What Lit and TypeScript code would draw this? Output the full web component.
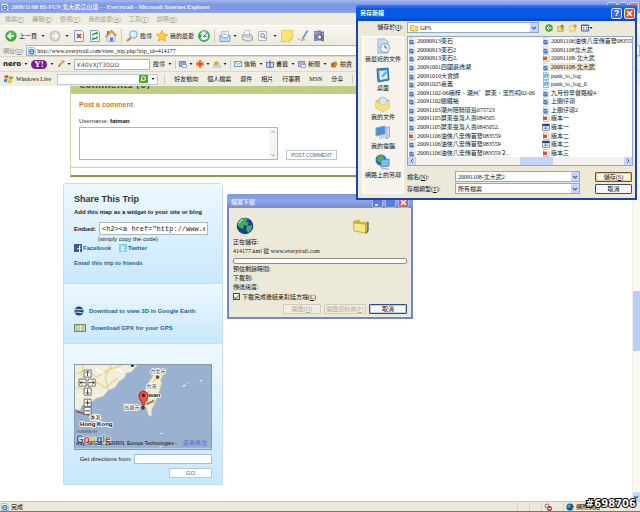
import { LitElement, html, css, svg } from "lit";
import { customElement } from "lit/decorators.js";

const base = css`
  * { box-sizing: border-box; }
  button, input, select, textarea {
    font: inherit; color: inherit; margin: 0; padding: 0; border: 0;
    background: none; border-radius: 0; min-width: 0; outline: none;
  }
  button { white-space: nowrap; }
  select { appearance: none; }
  svg { display: block; flex: none; }
  a { text-decoration: none; color: inherit; }
  u { text-decoration: underline; }
`;

const i = (size: number, body: unknown, h = size) =>
  html`<svg width=${size} height=${h} viewBox="0 0 ${size} ${h}" aria-hidden="true">${body}</svg>`;

const caret = i(4, svg`<path d="M0.5 1h3L2 3z" fill="#222"/>`);
const chevron = i(6, svg`<path d="M1 2l2 2 2-2" fill="none" stroke="#4d6185" stroke-width="1.2"/>`);
const cross = svg`<path d="M3 3l5 5M8 3l-5 5" stroke="#fff" stroke-width="1.4"/>`;

const back = i(12, svg`<circle cx="6" cy="6" r="5.6" fill="#3da537"/><circle cx="6" cy="4.5" r="4" fill="#6cc661" opacity=".6"/><path d="M6 3L3 6l3 3M3.3 6H9" fill="none" stroke="#fff" stroke-width="1.5"/>`);
const forward = i(12, svg`<circle cx="6" cy="6" r="5.6" fill="#c3c2bb"/><circle cx="6" cy="6" r="4.4" fill="#d4d3cc"/><path d="M6 3l3 3-3 3M8.7 6H3" fill="none" stroke="#fff" stroke-width="1.5"/>`);
const stop = i(12, svg`<path d="M1.5.5h7l2 2v9h-9z" fill="#f3f7ff" stroke="#7d9cdc"/><path d="M4 4l4 4M8 4l-4 4" stroke="#d63a1e" stroke-width="1.7"/>`);
const refresh = i(12, svg`<path d="M1.5.5h7l2 2v9h-9z" fill="#f3f7ff" stroke="#7d9cdc"/><path d="M3.5 5.5a2.6 2.6 0 0 1 4-1.6M8.5 6.5a2.6 2.6 0 0 1-4 1.6" fill="none" stroke="#2ca02c" stroke-width="1.5"/><path d="M6.5 2l3 .5-1.500 2.600zM5.500 10l-3-.5L4 7z" fill="#2ca02c"/>`);
const home = i(12, svg`<path d="M2 6v5.500h8V6L6 2.500z" fill="#dde8fa" stroke="#8ba5d6" stroke-width=".7"/><path d="M.5 7L6.500.8 11.500 6" fill="none" stroke="#de8f56" stroke-width="1.800"/><path d="M5 7.500h3v4H5z" fill="#4f83cc"/><path d="M2 1h2v3L2 5z" fill="#c26a46"/>`);
const search = i(12, svg`<path d="M5 7.500L1 11" stroke="#b88649" stroke-width="1.800"/><circle cx="7.500" cy="4.500" r="3.800" fill="#d5ecfd" stroke="#79a7d3"/><circle cx="6.500" cy="3.500" r="1.300" fill="#fff"/>`);
const star = i(12, svg`<path d="M6 .4l1.700 3.700 4 .5-3 2.700.8 4L6 9.300 2.500 11.300l.8-4-3-2.700 4-.5z" fill="#fbd433" stroke="#d99a1b" stroke-width=".7"/>`);
const history = i(12, svg`<circle cx="6" cy="6" r="5" fill="#e9f6ec" stroke="#49a35c" stroke-width="1.800"/><path d="M5.500 6.500L9 3M5.500 6.500h3" stroke="#3469b5"/><path d="M0 5l4-.5L2.500 8z" fill="#2f9b43"/><path d="M3 2a5 5 0 0 1 5-.4" stroke="#a0d7ab" stroke-width="1.200" fill="none"/>`);
const mail = i(12, svg`<path d="M2.500 1.500h7v6h-7z" fill="#fff" stroke="#9cb3d8" stroke-width=".7"/><path d="M3.500 3h4M3.500 4.500h5" stroke="#8dabe0" stroke-width=".7"/><path d="M1 5l5 3.500L11 5v6.500H1z" fill="#bddcf8" stroke="#5489c4" stroke-width=".7"/>`);
const print = i(12, svg`<path d="M4 .5h5l-1 5H3z" fill="#fff" stroke="#a9b2c2" stroke-width=".7"/><path d="M1 5l9-.5 1.500 2v3.500l-4 1.500-6-2z" fill="#cdd0d9" stroke="#8d93a1" stroke-width=".7"/><path d="M2.500 8l4.500 1.500 3-1" stroke="#fff" fill="none"/>`);
const edit = i(12, svg`<path d="M1.500 1.500h8v9h-8z" fill="#f7f7f7" stroke="#b6b6b6"/><circle cx="5.500" cy="5.500" r="2" fill="#e4e6ea" stroke="#868b94"/><path d="M7 7l2 2" stroke="#777"/>`);
const note = i(12, svg`<path d="M.5.500h11v8l-3 3h-8z" fill="#fde573" stroke="#ddbd47" stroke-width=".7"/><path d="M8.500 11.500v-3h3" fill="#e2c24b"/>`);
const pen = i(12, svg`<path d="M10.500.5l-5 8.500" stroke="#64a3cb" stroke-width="1.800"/><path d="M5.500 9l-1 2 2-1z" fill="#333"/><path d="M.5 10c2-3 2.500 1 4 0s3-1 5 .5" fill="none" stroke="#dbb24d"/>`);
const books = i(12, svg`<path d="M1 1h3.500v10H1z" fill="#6f8bc0"/><path d="M4.500.5H8v10H4.500z" fill="#8d6a93"/><path d="M8 1.500h3V11H8z" fill="#507cc0"/><path d="M2 3h1.500M5.500 3H7M9 4h1.500" stroke="#e8d692"/><circle cx="6.500" cy="7" r="2.200" fill="#e5ecf5" stroke="#434c69" stroke-width=".8"/><path d="M8 9l2 2.500" stroke="#a4663a"/>`);
const ie = i(8, svg`<path d="M.5.500h5l2 2v5h-7z" fill="#fff" stroke="#8caad9" stroke-width=".7"/><circle cx="3.800" cy="4.500" r="2.100" fill="none" stroke="#2a7bd0" stroke-width="1.200"/><path d="M2 4.600h3.700" stroke="#2a7bd0" stroke-width=".8"/>`);
const pencil = i(8, svg`<path d="M6.500 1L2.500 5" stroke="#e5a539" stroke-width="2"/><path d="M6 .5l1.500 1.500" stroke="#c4502d"/><path d="M2.500 4.500L1 7l2.500-1z" fill="#444"/>`);
const box = (c: string, d: string) => i(8, svg`<path d="M.5 1.500h6v5h-6z" fill=${c} stroke=${d} stroke-width=".8"/><path d="M1.500 3h4M3 4.500h4.500v3H3z" fill="#fff" stroke=${d} stroke-width=".6"/>`);
const redCross = i(8, svg`<path d="M0 2l4-1 4 1v4l-4 1-4-1z" fill="#f2aa44"/><path d="M4 0v8M1 4h6" stroke="#d3432e" stroke-width="1.300"/>`);
const sunset = i(8, svg`<circle cx="3.500" cy="3.500" r="2.500" fill="#f7a92d"/><path d="M0 7c0-3 3-2 3.500-1.500C4 3.500 7.500 4 7.500 7z" fill="#dce8f7" stroke="#7d9cc6" stroke-width=".6"/>`);
const envelope = i(8, svg`<path d="M.5 1.500h7v5h-7z" fill="#eaf2fd" stroke="#5b83c4" stroke-width=".8"/><path d="M1 2l3 2.500L7 2" fill="none" stroke="#5b83c4" stroke-width=".7"/>`);
const book = i(8, svg`<path d="M.5 2L4 3l3.500-1v5L4 7.500.5 7z" fill="#cfe0f7" stroke="#3a5d98" stroke-width=".8"/><path d="M4 0v7" stroke="#3a5d98"/>`);
const bag = i(8, svg`<path d="M1 3l5-2 1.500 3-2 3.500H1z" fill="#e08b2e"/><path d="M1 4.500l4-1M1.500 6h4" stroke="#7c4215" stroke-width=".8"/>`);
const flag = i(10, svg`<path d="M.5 2c2-1.500 3-1 4-.3L3.700 4.600C2.600 4 1.500 4 .3 4.600z" fill="#e85a2c"/><path d="M5.200 2c1.500.8 2.600.8 4.300 0l-.9 3c-1.500.8-2.700.6-4-.1z" fill="#7cb83c"/><path d="M0 5.500c1.500-.7 2.400-.5 3.500 0l-.8 3C1.800 8 .8 8 0 8.300z" fill="#3b8ed2"/><path d="M4.300 5.800c1.300.7 2.400.7 4 0l-.8 2.900c-1.400.7-2.600.6-3.900-.1z" fill="#f5bd2d"/>`);
const globe = i(8, svg`<circle cx="4" cy="4" r="3.600" fill="#1d4fa8"/><path d="M2 1.500l3 .5-1.500 3-2.500-1zM5.500 4l2 .5-1 2.500z" fill="#5cb848"/>`);

const fileIcon = (kind: string) => kind === "kml"
  ? i(8, svg`<path d="M1.500.5h4l1.500 1.500v5.500H1.500z" fill="#fff" stroke="#abbac6" stroke-width=".6"/><circle cx="3.500" cy="5" r="2.500" fill="#4a74c2"/><path d="M1.300 4.800c1.500 1 3-.8 4.600 0" stroke="#d5e4ff" fill="none" stroke-width=".9"/>`)
  : kind === "ppt"
  ? i(8, svg`<path d="M1.500.5h4l1.500 1.500v5.500H1.500z" fill="#fff" stroke="#9a9aa8" stroke-width=".6"/><path d="M1 2.500h4v3.500H1z" fill="#d9582b"/>`)
  : kind === "log"
  ? i(8, svg`<path d="M1.500.5h4l1.500 1.500v5.500H1.500z" fill="#e9f5fd" stroke="#6893b5" stroke-width=".6"/><path d="M2 2h4v3.500H2z" fill="#57a5d6"/><path d="M2.500 3l2.500 1.500" stroke="#e9f5fd"/>`)
  : i(8, svg`<path d="M.5 1h7v6.500h-7z" fill="#fff" stroke="#405585" stroke-width=".6"/><path d="M.5 1h7v2h-7z" fill="#26458f"/><path d="M1.500 4h5M1.500 5.500h5M3.500 3.500v4" stroke="#5c77a8" stroke-width=".7"/>`);

const browserFont = css`"Liberation Serif", "Noto Sans CJK TC", serif`;

@customElement("browser-chrome")
class BrowserChrome extends LitElement {
  static styles = [base, css`
    :host { display: block; font: 6px/8px ${browserFont}; color: #111; background: #efede1; }
    .title { height: 13px; display: flex; align-items: center; gap: 2px; padding: 0 1px;
      background: linear-gradient(#a3b9ee, #7d97e2 35%, #809ce8 80%, #8fa9ea); color: #e9effc; font: bold 6px/8px ${browserFont}; }
    .title h1 { font: inherit; margin: 0; flex: 1; white-space: nowrap; }
    .caption { display: flex; gap: 1px; }
    .caption button { width: 10px; height: 10px; border: 1px solid #c9d5f6; border-radius: 2px; background: #6c87dc; }
    .caption .shut { background: #cf7d84; }
    .menu { height: 12px; display: flex; align-items: center; gap: 8px; padding: 0 5px; color: #a29f92; }
    .row { display: flex; align-items: center; white-space: nowrap; }
    .tools { height: 20px; gap: 4px; padding: 0 5px; background: linear-gradient(#f7f6f0, #eceadd); border-top: 1px solid #fff; }
    .tools button, .links button { display: flex; align-items: center; gap: 2px; }
    .sep { width: 1px; height: 14px; background: #cfccbc; }
    .links .sep { height: 9px; }
    .address { height: 11px; padding-left: 3px; gap: 3px; color: #8d8a80; }
    .url { flex: 1; display: flex; align-items: center; gap: 1px; height: 11px; padding-left: 1px;
      background: #fff; border: 1px solid #9fb6d0; color: #111; }
    .url input { flex: 1; }
    .links { height: 15px; padding: 0 3px; gap: 3px; border-top: 1px solid #d9d6c8; background: #f0eee3; }
    .nero { font: bold 7px/8px "DejaVu Sans", sans-serif; }
    .yahoo { width: 16px; height: 9px; border-radius: 5px; background: #7b1c94; color: #fff; justify-content: center; font: bold 9px/9px "Liberation Serif", serif; }
    .query { width: 76px; height: 11px; border: 1px solid #9fb6d0; background: #fff; padding: 0 2px; font: 6px/8px "DejaVu Sans", sans-serif; color: #555; }
    .live { gap: 9px; padding: 0 4px; border-top: 1px solid #dcd9cb; }
    .search { display: flex; align-items: center; gap: 6px; }
    .brand { display: flex; align-items: center; gap: 2px; }
    .livebox { display: flex; align-items: center; width: 101px; height: 11px; border: 1px solid #b9c7d6; background: #fff; gap: 3px; padding-right: 2px; }
    .livebox input { flex: 1; }
    .go { width: 9px; height: 8px; background: #58a61c; }
  `];
  render() {
    return html`
      <header class="title">${ie}<h1>2009/11/08 HI-FUN 北大武江山嶺 - - Everytrail - Microsoft Internet Explorer</h1>
        <div class="caption"><button aria-label="最小化"></button><button aria-label="最大化"></button><button class="shut" aria-label="關閉"></button></div>
      </header>
      <nav class="menu">
        ${[["檔案", "F"], ["編輯", "E"], ["檢視", "V"], ["我的最愛", "A"], ["工具", "T"], ["說明", "H"]].map(([t, k]) => html`<button>${t}(<u>${k}</u>)</button>`)}
      </nav>
      <div class="row tools">
        <button>${back}上一頁</button>${caret}<button aria-label="下一頁">${forward}</button>${caret}
        <button aria-label="停止">${stop}</button><button aria-label="重新整理">${refresh}</button><button aria-label="首頁">${home}</button>
        <span class="sep"></span>
        <button>${search}搜尋</button><button>${star}我的最愛</button><button aria-label="記錄">${history}</button>
        <span class="sep"></span>
        <button aria-label="郵件">${mail}${caret}</button><button aria-label="列印">${print}</button>
        <button aria-label="編輯">${edit}</button>${caret}<button aria-label="便箋">${note}</button>
        <button aria-label="筆">${pen}</button><button aria-label="參考資料">${books}</button>
      </div>
      <div class="row address"><label for="url">網址(<u>D</u>)</label>
        <div class="url">${ie}<input id="url" value="http://www.everytrail.com/view_trip.php?trip_id=414177"></div>
      </div>
      <div class="row links">
        <button class="nero">nero</button>${caret}
        <button class="yahoo" aria-label="Yahoo">Y!</button>${caret}
        <button aria-label="標記">${pencil}${caret}</button>
        <input class="query" aria-label="搜尋字詞" value="K40VXJT30DD">
        <button>搜尋</button>${caret}<span class="sep"></span>
        <button aria-label="視窗">${box("#9fbdf0", "#4674c3")}${caret}</button><button aria-label="加入">${redCross}${caret}</button><button aria-label="天氣">${sunset}${caret}</button>
        <span class="sep"></span>
        <button>${envelope}信箱</button>${caret}<button>${book}書籤</button>${caret}<button>${box("#c8c7ee", "#6b70b5")}新聞</button>${caret}<button>${bag}拍賣</button>${caret}
      </div>
      <div class="row links live">
        <div class="search"><span class="brand">${flag}Windows Live</span>
          <div class="livebox"><input aria-label="Windows Live 搜尋"><button class="go" aria-label="搜尋">${i(8, svg`<circle cx="4.500" cy="3.500" r="2" fill="none" stroke="#fff"/><path d="M3 5L1.500 6.500" stroke="#fff"/>`)}</button>${caret}</div>
          <span class="sep"></span></div>
        ${["好友動向", "個人檔案", "郵件", "相片", "行事曆", "MSN", "分享"].map(t => html`<button>${t}</button>`)}
        <span class="sep"></span>
      </div>`;
  }
}

@customElement("trip-map")
class TripMap extends LitElement {
  static styles = [base, css`
    :host { display: block; border: 1px solid #8c99a8; }
    svg { width: 100%; height: auto; font-family: "Liberation Sans", "Noto Sans CJK TC", sans-serif; }
    .lbl { font-size: 5px; fill: #333; stroke: #fff; stroke-width: 1.5; paint-order: stroke; }
    .bold { font-size: 6px; font-weight: bold; fill: #111; }
    .tiny { font-size: 3px; fill: #444; }
    .logo { font-size: 10px; font-weight: bold; stroke: #fff; stroke-width: 1; paint-order: stroke; }
    .credit { font-size: 5px; fill: #111; }
    .terms { font-size: 6px; fill: #5f66d8; }
  `];
  render() {
    const ctl = (x: number, y: number, d: string) => svg`<path d="M${x} ${y}h7v7h-7z" fill="#fff" stroke="#555" stroke-width=".8"/><path transform="translate(${x} ${y})" d=${d} fill="none" stroke="#333" stroke-width=".9"/>`;
    return html`<svg viewBox="0 0 135 83" role="img" aria-label="Taiwan">
      <path d="M0 0h135v83H0z" fill="#9ab2cf"/>
      <path d="M0 0h62l-3 3-3 4-5 1-2 5-6 4-3 5-7 3-5 6-7 2-6 5-8 2-2 5-8-2-5 1z" fill="#f1eedb"/>
      <path d="M0 9l12-4 9 7 14-8 12-4M0 22l12 3 10-8 8 6 12-10M8 0l-2 10 8 12-4 20M36 0l-6 12 3 14" fill="none" stroke="#edc979" stroke-width="1"/>
      <path d="M20 4l8 4M3 31l12-1M42 4l6 3" stroke="#fff" stroke-width="2"/>
      <path d="M1 46l7 2 7 2" stroke="#9b4b53" fill="none" stroke-width="1.500"/>
      <path d="M78 10l6-3 3 4-2 4 1 3-3 10-3 8-4 9v6l-3-1-2-7-4-6 1-8 4-10z" fill="#f2ecc9" stroke="#d0cc9f" stroke-width=".6"/>
      <path d="M81 12l-6 9-4 12 2 7" stroke="#e2ae50" fill="none" stroke-width=".8"/>
      <path d="M107 21l3-1M112 18h1M124 16l2-1M85 68h2M84 81h2" stroke="#e9f0f6" stroke-width="1.200"/>
      <path d="M71 38l8-4-1 3-8 3z" fill="#444" opacity=".65"/>
      <circle cx="82" cy="12" r="1.800" fill="#7c3838"/><circle cx="67.500" cy="42.500" r="1.800" fill="#473032"/><circle cx="57" cy="0.500" r="1.500" fill="#222"/>
      <text class="lbl" x="75" y="8">台北市</text><text class="lbl" x="71" y="23">台灣</text>
      <text class="lbl bold" x="73" y="32">wan</text><text class="lbl" x="49" y="44">高雄市</text>
      <text class="lbl" x="15" y="54">香港</text><text class="lbl bold" x="5" y="61">Hong Kong</text>
      <path d="M68 42c-1-6-4.500-7-4.500-11.500a4.500 4.500 0 0 1 9 0C72.500 35 69 36 68 42z" fill="#ee5145" stroke="#801d18" stroke-width=".8"/><circle cx="68" cy="30" r="1.500" fill="#300"/>
      ${ctl(9, 5, "M3.500 6V1M1.500 3l2-2 2 2")}${ctl(4, 14, "M6 3.500H1M3 1.500l-2 2 2 2")}${ctl(13, 14, "M1 3.500h5M4 1.500l2 2-2 2")}${ctl(9, 23, "M3.500 1v5M1.500 4l2 2 2-2")}${ctl(9, 34, "M3.500 1v5M1 3.500h5")}${ctl(9, 42, "M1 3.500h5")}
      <text class="tiny" x="2" y="68">POWERED BY</text>
      <text class="logo" x="1" y="77"><tspan fill="#2a56c6">G</tspan><tspan fill="#d8392b">o</tspan><tspan fill="#e8b21b">o</tspan><tspan fill="#2a56c6">g</tspan><tspan fill="#35983d">l</tspan><tspan fill="#d8392b">e</tspan></text>
      <text class="credit" x="1" y="79">way, NFGIS, ZENRIN, Europa Technologies -</text>
      <text class="terms" x="107" y="79">使用條款</text>
    </svg>`;
  }
}

@customElement("trip-page")
class TripPage extends LitElement {
  static styles = [base, css`
    :host { display: grid; grid-template-columns: 1fr 8px; background: #fff; font: 6px/8px "Liberation Sans", sans-serif; color: #333; min-height: 0; }
    .doc { min-width: 0; overflow: hidden; }
    .comments { max-width: 500px; margin-left: 70px; border-left: 1px solid #cdd6a6; border-bottom: 2px solid #7f9e52; }
    .head { height: 8px; background: #bfcd84; overflow: hidden; display: flex; align-items: flex-end; padding-left: 8px; }
    .head h2 { margin: 0 0 4px; font: bold 9px/10px "DejaVu Sans", sans-serif; color: #4b5334; }
    form { display: flex; align-items: flex-end; gap: 8px; }
    .post { padding: 7px 8px; border-bottom: 1px solid #cdd2b4; margin-bottom: 7px; }
    h3 { margin: 0 0 8px; font: bold 7px/8px "Liberation Sans", sans-serif; color: #d9792f; }
    .user { margin: 0 0 2px; }
    .user b { color: #111; }
    .text { display: flex; width: 199px; height: 33px; border: 1px solid #a6b6c6; }
    textarea { flex: 1; resize: none; }
    .bar { width: 8px; background: #f6f5f0; display: flex; flex-direction: column; justify-content: space-between; }
    .push { border: 1px solid #b9c8d2; color: #3d6b8c; background: #fff; height: 10px; }
    .wide { width: 51px; font-size: 5px; }
    .side { width: 160px; margin: 6px 0 0 63px; border: 1px solid #c3deec; border-radius: 3px 3px 0 0; color: #222; }
    .card { background: linear-gradient(#edf8ff, #c9e8fd); padding: 0 10px; }
    .card + .card { border-top: 1px solid #c3dff0; }
    .share { height: 99px; padding-top: 9px; }
    .share h2 { margin: 0 0 3px; font: bold 9px/12px "Liberation Sans", sans-serif; color: #333; }
    p { margin: 0; white-space: nowrap; }
    .embed { display: flex; align-items: center; gap: 3px; margin-top: 6px; font-weight: bold; }
    .embed input { width: 109px; height: 13px; border: 1px solid #a8bccb; background: #fff; padding: 0 2px; font: 7px/9px "Liberation Mono", monospace; color: #222; }
    .hint { padding-left: 24px; }
    .links { display: flex; gap: 8px; font-weight: bold; color: #1f6394; margin: 1px 0 7px; }
    .link, .links a { display: flex; align-items: center; gap: 1px; }
    .link { font-weight: bold; color: #1f6394; }
    .get { height: 60px; padding-top: 22px; display: flex; flex-direction: column; gap: 7px; }
    .get a { gap: 5px; height: 10px; }
    .where { height: 141px; padding-top: 20px; }
    .dir { display: grid; grid-template-columns: auto 78px; justify-content: end; gap: 4px 2px; margin-top: 4px; align-items: center; }
    .dir input { height: 10px; border: 1px solid #a8c2d5; background: #fff; }
    .dir .push { grid-column: 2; width: 43px; justify-self: end; }
    .scroll { background: #f8f7f2; display: flex; flex-direction: column; border-left: 1px solid #efeee8; padding-top: 205px; }
    .thumb { height: 60px; background: #bccdf8; border-radius: 1px; }
    .down { margin-top: auto; height: 9px; background: #c9d7fb; display: flex; align-items: center; }
  `];
  render() {
    const arrow = (d: string) => i(8, svg`<path d=${d} fill="none" stroke="#b0afa8"/>`);
    return html`
      <main class="doc">
        <section class="comments">
          <div class="head"><h2>Comments (0)</h2></div>
          <div class="post">
            <h3>Post a comment</h3>
            <p class="user"><label for="comment">Username:</label> <b>fatman</b></p>
            <form @submit=${(e: Event) => e.preventDefault()}>
              <div class="text"><textarea id="comment"></textarea><span class="bar">${arrow("M2 5l2-2 2 2")}${arrow("M2 3l2 2 2-2")}</span></div>
              <button class="push wide">POST COMMENT</button>
            </form>
          </div>
        </section>
        <aside class="side">
          <section class="card share">
            <h2>Share This Trip</h2>
            <p><b>Add this map as a widget to your site or blog</b></p>
            <div class="embed"><label for="embed">Embed:</label><input id="embed" value='<h2><a href="http://www.everytrail.com">'></div>
            <p class="hint">(simply copy the code)</p>
            <div class="links"><a href="#">${i(8, svg`<path d="M0 0h8v8H0z" fill="#3b5998"/><path d="M6.500 2H5.500v6M3.500 4.500h3" stroke="#fff" stroke-width="1.100" fill="none"/>`)}Facebook</a>
              <a href="#">${i(8, svg`<path d="M0 0h8v8H0z" fill="#7fd3ee"/><path d="M3 1.500v4.500h2.500M3 3.500h2.500" stroke="#fff" stroke-width="1.300" fill="none"/>`)}Twitter</a></div>
            <a class="link" href="#">Email this trip to friends</a>
          </section>
          <section class="card get">
            <a class="link" href="#">${i(10, svg`<circle cx="5" cy="5" r="4.500" fill="#23406e"/><path d="M1 4c3-2 5 1 8-1M1.500 6.500c3-1.500 4 1 7 0" stroke="#b9cbe4" stroke-width="1.200" fill="none"/>`)}Download to view 3D in Google Earth</a>
            <a class="link" href="#">${i(12, svg`<path d="M.5 1.500h11v7H.5z" fill="#b9cf9c" stroke="#6f7f69"/><path d="M3 4l2 1M6.500 2v6" stroke="#e5edd2"/>`, 10)}Download GPX for your GPS</a>
          </section>
          <section class="card where">
            <trip-map></trip-map>
            <form class="dir" @submit=${(e: Event) => e.preventDefault()}>
              <label for="from">Get directions from:</label><input id="from"><button class="push">GO</button>
            </form>
          </section>
        </aside>
      </main>
      <div class="scroll"><div class="thumb"></div><div class="down">${chevron}</div></div>`;
  }
}

const dialogBase = css`
  :host { display: block; font: 6px/8px ${browserFont}; color: #111; background: #ece9d8; }
  .bar { display: flex; align-items: center; gap: 2px; color: #fff; padding: 0 2px 0 4px; }
  .bar h2 { flex: 1; margin: 0; font: bold 6px/8px ${browserFont}; }
  .cap { width: 11px; height: 11px; border: 1px solid #dbe4fc; border-radius: 2px; background: #3b6be6; color: #fff; font: bold 9px/9px "Liberation Sans", sans-serif; text-align: center; }
  .cap svg { margin: -1px; }
  .red { background: #dc5231; }
  .btn { height: 10px; border: 1px solid #31537b; border-radius: 1px; background: #f8f7f3; text-align: center; }
`;

@customElement("download-dialog")
class DownloadDialog extends LitElement {
  static styles = [base, dialogBase, css`
    :host { border: 2px solid #6f86d2; border-top: 0; border-radius: 3px 3px 0 0; }
    .bar { height: 14px; margin: 0 -2px; padding: 2px 4px 0 4px; background: linear-gradient(#7f98e0, #8ba5ec 50%, #738cd9); border-radius: 3px 3px 0 0; color: #dfe6fb; }
    .cap { background: #5c7cdc; border-color: #a8b9ee; }
    .cap.red { background: #c16674; }
    .body { padding: 9px 4px 3px; display: flex; flex-direction: column; }
    .pics { display: grid; grid-template-columns: 116px auto; padding: 0 3px; align-items: center; margin-bottom: 3px; }
    p { margin: 0; height: 9px; line-height: 9px; }
    progress { appearance: none; width: 100%; height: 6px; border: 1px solid #8d8b80; border-radius: 2px; background: #fff; overflow: hidden; margin: 2px 0 1px; display: block; }
    progress::-webkit-progress-bar { background: #fff; }
    .check { display: flex; align-items: center; gap: 2px; height: 9px; }
    .check input { appearance: none; display: grid; place-items: center; width: 7px; height: 7px; border: 1px solid #1c5180; background: #fff; }
    .check input:checked::after { content: ""; width: 2px; height: 4px; border: solid #2d9a2d; border-width: 0 1px 1px 0; transform: rotate(40deg); }
    .acts { display: flex; justify-content: flex-end; gap: 3px; margin-top: 3px; }
    .btn { width: 38px; }
    .btn.big { width: 42px; }
    .btn:disabled { color: #aeab9b; border-color: #cfccbd; background: #f0eee2; }
    .main { box-shadow: inset 0 0 0 1px #b9cdf3; }
  `];
  render() {
    return html`
      <div class="bar"><h2>檔案下載</h2><button class="cap" aria-label="最小化">${i(11, svg`<path d="M3 8h3" stroke="#fff" stroke-width="1.500"/>`)}</button><button class="cap" aria-label="最大化" disabled></button><button class="cap red" aria-label="關閉">${i(11, cross)}</button></div>
      <div class="body">
        <div class="pics">
          ${i(18, svg`<circle cx="9" cy="9" r="8.300" fill="#1c3f93"/><path d="M4 3c3-2 6-2 8-1l-2 3 3 1-2 3-3-1-1 4-4-2-2-3zM11 9l5-1c.5 3-1 6-3.500 7.500L10 13z" fill="#42ad53"/><path d="M3 6c1-2 2.500-3 4-3.500" stroke="#a8e6f4" fill="none" stroke-width="1.300"/>`)}
          ${i(18, svg`<path d="M1 4l6-1.500L9 5l7-.5V14l-2 2.500L2 14z" fill="#c9b93c"/><path d="M1.500 6l12 1v9L2 14z" fill="#f3e888" stroke="#a39434" stroke-width=".6"/><path d="M16 5v9l-2 2.500" stroke="#4a441d" fill="none"/>`)}
        </div>
        <p>正在儲存:</p><p>414177.kml 從 www.everytrail.com</p>
        <progress value="0" max="100" aria-label="下載進度"></progress>
        <p>預估剩餘時間:</p><p>下載到:</p><p>傳送速度:</p>
        <label class="check"><input type="checkbox" checked><span>下載完成後結束對話方塊(<u>C</u>)</span></label>
        <div class="acts"><button class="btn" disabled>開啟(<u>O</u>)</button><button class="btn big" disabled>開啟資料夾(<u>F</u>)</button><button class="btn main">取消</button></div>
      </div>`;
  }
}

const files: [string, string][] = [
  ["kml", "20090913東石"], ["kml", "20090913東石2"], ["kml", "20090913東石2."], ["kml", "20091001四國遊透湖"],
  ["kml", "20091010大會師"], ["kml", "20091025嘉義"], ["kml", "20091102-06楠梓、潮州゛屏東、忠烈祠02-06"], ["kml", "20091102關綴裕"],
  ["kml", "20091103潮州陪騎環島075723"], ["kml", "20091105屏東臺灣人壽084505"], ["kml", "20091105屏東臺灣人壽0845052."], ["ppt", "20091106油俠八忠傳首發083559"],
  ["kml", "20091106油俠八忠傳首發083559"], ["kml", "20091106油俠八忠傳首發083559２."],
  ["kml", "20091106油俠八忠傳首發083559"], ["kml", "20091108北大武"], ["ppt", "20091108-北大武"], ["kml", "20091108-北大武"],
  ["log", "push_to_log"], ["log", "push_to_log_0"], ["kml", "九月份早餐路線4"], ["kml", "上關仔嶺"],
  ["kml", "上關仔嶺2"], ["ppt", "版本一"], ["doc", "版本一"], ["ppt", "版本二"], ["doc", "版本二"], ["ppt", "版本三"],
];

@customElement("save-dialog")
class SaveDialog extends LitElement {
  static styles = [base, dialogBase, css`
    :host { border: 2px solid #1c41b4; border-top: 0; border-radius: 4px 4px 0 0; }
    .bar { height: 16px; margin: 0 -2px; background: linear-gradient(#2f7df5, #0a56e4 25%, #0659e8 70%, #0646c8); border-radius: 3px 3px 0 0; }
    .body { display: grid; grid-template-columns: 42px 1fr; gap: 3px; padding: 1px 2px 4px 4px; }
    .look { text-align: right; padding-right: 1px; line-height: 11px; }
    .top { display: flex; gap: 6px; align-items: center; height: 11px; }
    .icons { display: flex; gap: 4px; align-items: center; }
    .icons button { display: flex; align-items: center; }
    .combo { display: flex; align-items: center; height: 11px; border: 1px solid #8ea9c9; background: #fff; padding-left: 2px; gap: 2px; }
    .combo select, .combo input { flex: 1; height: 9px; }
    .drop { width: 8px; height: 9px; background: #c5d5fb; display: flex; align-items: center; justify-content: center; }
    .lookin { width: 132px; }
    .places { background: #f5f3ea; border: 1px solid #fff; display: flex; flex-direction: column; align-items: center; justify-content: space-between; padding: 1px 0 14px; }
    .places button { display: flex; flex-direction: column; align-items: center; gap: 1px; }
    .right { display: flex; flex-direction: column; gap: 5px; min-width: 0; }
    .list { border: 1px solid #8ea9c9; background: #fff; overflow: hidden; }
    ul { margin: 0; padding: 0; list-style: none; display: grid; grid-template-rows: repeat(14, 1fr); grid-auto-flow: column; grid-template-columns: 134px 1fr; height: 120px; }
    li { display: flex; align-items: center; gap: 1px; white-space: nowrap; overflow: hidden; min-height: 0; }
    .sel span { background: #ece4cc; padding: 0 1px; margin: 0 -1px; }
    .hbar { display: flex; height: 8px; background: #f3f2ec; }
    .hbar span { width: 8px; background: #c5d5fb; display: flex; align-items: center; justify-content: center; }
    .hbar .thumb { width: 33px; margin: 0 auto 0 104px; }
    .form { display: grid; grid-template-columns: 48px 125px 1fr; gap: 1px 0; align-items: center; }
    .form .btn { width: 37px; justify-self: end; margin-right: 1px; }
    .form .ok { border-color: #6c5626; box-shadow: inset 0 0 0 1px #f3cd7d; }
  `];
  render() {
    const folder = i(8, svg`<path d="M.5 1.500h3l1 1h3v4.500h-7z" fill="#f9de79" stroke="#c49a35" stroke-width=".7"/>`);
    const drop = html`<span class="drop">${chevron}</span>`;
    const place = (ic: unknown, t: string) => html`<button>${ic}${t}</button>`;
    const row = (f: [string, string], n: number) => html`<li class=${n === 17 ? "sel" : ""}>${fileIcon(f[0])}<span>${f[1]}</span></li>`;
    return html`
      <div class="bar"><h2>另存新檔</h2><button class="cap" aria-label="說明">?</button><button class="cap red" aria-label="關閉">${i(11, cross)}</button></div>
      <div class="body">
        <label class="look" for="look">儲存於(<u>I</u>):</label>
        <div class="top">
          <div class="combo lookin">${folder}<select id="look"><option>GPS</option></select>${drop}</div>
          <div class="icons">
            <button aria-label="上一步">${i(8, svg`<circle cx="4" cy="4" r="3.800" fill="#42a838"/><path d="M4 2L2 4l2 2M2 4h4.500" stroke="#fff" fill="none"/>`)}</button>
            <button aria-label="往上">${i(8, svg`<path d="M.5 2.500h6V7.500h-6z" fill="#f6d565" stroke="#c09a31" stroke-width=".6"/><path d="M5 6V1M3.500 2.500L5 .8l1.500 1.700" stroke="#2c9a2c" fill="none"/>`)}</button>
            <button aria-label="新資料夾">${i(8, svg`<path d="M.5 2h6v5h-6z" fill="#fae9a0" stroke="#d8b34a" stroke-width=".6"/><path d="M6 0v4M4 2h4" stroke="#ee7b35"/>`)}</button>
            <button aria-label="檢視">${i(8, svg`<path d="M.5 1h7v6h-7z" fill="#fff" stroke="#3865b6"/><path d="M0 1.500h8" stroke="#3865b6"/><path d="M2 3h1.500v1.200H2zM5 3h1.500v1.200H5zM2 5h1.500v1.200H2zM5 5h1.500v1.200H5z" fill="#5a82c8"/>`)}${caret}</button>
          </div>
        </div>
        <div class="places">
          ${place(i(16, svg`<path d="M3 1h7l3 3v11H3z" fill="#c6dcf3" stroke="#87a7ca" stroke-width=".8"/><circle cx="10" cy="10" r="4.500" fill="#eff8ff" stroke="#7ba0c5"/><path d="M10 7v3h2.500" stroke="#3f6a96" fill="none"/>`), "我最近的文件")}
          ${place(i(16, svg`<path d="M2 2l11-1 1 12-11 2z" fill="#3f8fd0" stroke="#2a70aa"/><path d="M4 4l8-.5.5 8L5 13z" fill="#e2f1fc"/><path d="M6 9l5-5 1.500 1.500L8 10.500z" fill="#6aaee0"/>`), "桌面")}
          ${place(i(16, svg`<path d="M1 5l5-2 2 2 6-1v8l-6 3.500L1 12z" fill="#f5d873" stroke="#cda23f" stroke-width=".8"/><circle cx="8" cy="5" r="4" fill="#d4eaf8" stroke="#8fb3d4" stroke-width=".8"/><path d="M1 7l8 2 5-4v7l-6 3.500L1 12z" fill="#fbe07a"/>`), "我的文件")}
          ${place(i(16, svg`<path d="M1 3l9-2v8l-9 2z" fill="#4a8ede" stroke="#8aa2c4"/><path d="M11 2h3.500v10L11 14z" fill="#c9d4e6" stroke="#8397b7" stroke-width=".7"/><path d="M4 11l5-1 2 3-7 1.500z" fill="#cdd5e3"/>`), "我的電腦")}
          ${place(i(16, svg`<circle cx="6" cy="6" r="5.500" fill="#2a6cc4"/><path d="M3 2l5-1 1 4-4 3-3-2z" fill="#4eb54d"/><path d="M6 6l8-1v7l-8 1z" fill="#71c3ee" stroke="#6b87a9"/><path d="M7 14h6l1 1.500H6z" fill="#aebbcf"/>`), "網路上的芳鄰")}
        </div>
        <div class="right">
          <div class="list"><ul>${files.map(row)}</ul>
            <div class="hbar"><span>${i(6, svg`<path d="M4 1L2 3l2 2" fill="none" stroke="#4d6185"/>`)}</span><span class="thumb"></span><span>${i(6, svg`<path d="M2 1l2 2-2 2" fill="none" stroke="#4d6185"/>`)}</span></div>
          </div>
          <div class="form">
            <label for="name">檔名(<u>N</u>):</label><div class="combo"><input id="name" value="20091108-北大武2">${drop}</div><button class="btn ok">儲存(<u>S</u>)</button>
            <label for="type">存檔類型(<u>T</u>):</label><div class="combo"><select id="type"><option>所有檔案</option></select>${drop}</div><button class="btn">取消</button>
          </div>
        </div>
      </div>`;
  }
}

@customElement("app-root")
class AppRoot extends LitElement {
  static styles = [base, css`
    :host { display: flex; flex-direction: column; min-height: 100vh; position: relative; overflow: hidden; }
    trip-page { flex: 1; }
    download-dialog { position: absolute; left: 227px; top: 194px; width: 186px; }
    save-dialog { position: absolute; left: 356px; top: 5px; width: 281px; }
    .status { height: 11px; display: flex; align-items: center; gap: 2px; padding: 0 1px; background: #ece9d8; border-top: 1px solid #c9c6b6; border-bottom: 1px solid #587fb4; font: 6px/8px ${browserFont}; }
    .status .fill { flex: 1; }
    .cell { display: flex; align-items: center; gap: 2px; height: 8px; border-left: 1px solid #d3d0c0; padding-left: 2px; width: 20px; }
    .zone { width: 76px; }
    .none { width: 10px; }
    .mark { position: absolute; right: 4px; bottom: 2px; font: bold 10px/12px "DejaVu Sans", sans-serif; color: #fff; -webkit-text-stroke: 2px #000; paint-order: stroke fill; }
  `];
  render() {
    return html`
      <browser-chrome></browser-chrome>
      <trip-page></trip-page>
      <footer class="status">${ie}<span>完成</span><span class="fill"></span>
        <span class="cell none"></span><span class="cell none"></span><span class="cell">${i(8, svg`<circle cx="3" cy="3" r="2" fill="#ddd" stroke="#555" stroke-width=".7"/><circle cx="5.500" cy="5.500" r="2.500" fill="#d92b2b"/><path d="M4 5.500h3" stroke="#fff"/>`)}</span>
        <span class="cell zone">${globe}網際網路</span></footer>
      <download-dialog></download-dialog>
      <save-dialog></save-dialog>
      <span class="mark">#698706</span>`;
  }
}
